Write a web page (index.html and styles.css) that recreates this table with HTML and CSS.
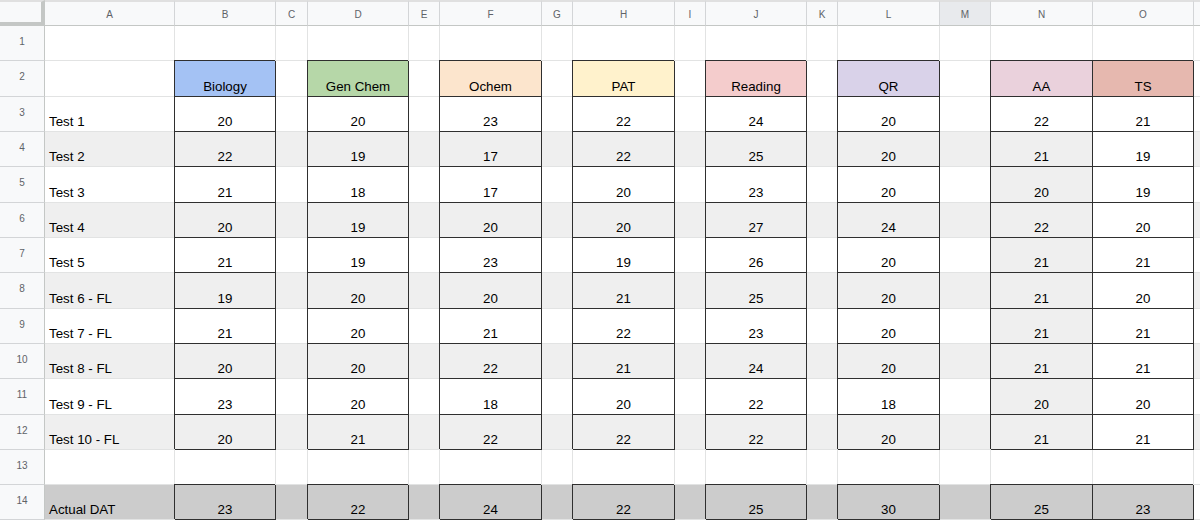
FILE: index.html
```html
<!DOCTYPE html>
<html>
<head>
<meta charset="utf-8">
<link rel="stylesheet" href="styles.css">
</head>
<body>
<div class="sheet">
  <div class="row hdr">
    <div class="corner"></div>
    <div class="ch">A</div><div class="ch">B</div><div class="ch">C</div><div class="ch">D</div><div class="ch">E</div><div class="ch">F</div><div class="ch">G</div><div class="ch">H</div><div class="ch">I</div><div class="ch">J</div><div class="ch">K</div><div class="ch">L</div><div class="ch sel">M</div><div class="ch">N</div><div class="ch">O</div><div class="ch end"></div>
  </div>

  <div class="row">
    <div class="rh">1</div>
    <div class="c"></div><div class="c"></div><div class="c"></div><div class="c"></div><div class="c"></div><div class="c"></div><div class="c"></div><div class="c"></div><div class="c"></div><div class="c"></div><div class="c"></div><div class="c"></div><div class="c"></div><div class="c"></div><div class="c"></div><div class="c end"></div>
  </div>

  <div class="row">
    <div class="rh">2</div>
    <div class="c"></div>
    <div class="c b n bio">Biology</div><div class="c"></div>
    <div class="c b n gen">Gen Chem</div><div class="c"></div>
    <div class="c b n och">Ochem</div><div class="c"></div>
    <div class="c b n pat">PAT</div><div class="c"></div>
    <div class="c b n rd">Reading</div><div class="c"></div>
    <div class="c b n qr">QR</div><div class="c"></div>
    <div class="c b n aa">AA</div>
    <div class="c b n ts">TS</div><div class="c end"></div>
  </div>

  <div class="row">
    <div class="rh">3</div>
    <div class="c">Test 1</div>
    <div class="c b n">20</div><div class="c"></div>
    <div class="c b n">20</div><div class="c"></div>
    <div class="c b n">23</div><div class="c"></div>
    <div class="c b n">22</div><div class="c"></div>
    <div class="c b n">24</div><div class="c"></div>
    <div class="c b n">20</div><div class="c"></div>
    <div class="c b n">22</div>
    <div class="c b n">21</div><div class="c end"></div>
  </div>

  <div class="row g">
    <div class="rh">4</div>
    <div class="c">Test 2</div>
    <div class="c b n">22</div><div class="c"></div>
    <div class="c b n">19</div><div class="c"></div>
    <div class="c b n">17</div><div class="c"></div>
    <div class="c b n">22</div><div class="c"></div>
    <div class="c b n">25</div><div class="c"></div>
    <div class="c b n">20</div><div class="c"></div>
    <div class="c b n gy">21</div>
    <div class="c b n w">19</div><div class="c end"></div>
  </div>

  <div class="row">
    <div class="rh">5</div>
    <div class="c">Test 3</div>
    <div class="c b n">21</div><div class="c"></div>
    <div class="c b n">18</div><div class="c"></div>
    <div class="c b n">17</div><div class="c"></div>
    <div class="c b n">20</div><div class="c"></div>
    <div class="c b n">23</div><div class="c"></div>
    <div class="c b n">20</div><div class="c"></div>
    <div class="c b n gy">20</div>
    <div class="c b n">19</div><div class="c end"></div>
  </div>

  <div class="row g">
    <div class="rh">6</div>
    <div class="c">Test 4</div>
    <div class="c b n">20</div><div class="c"></div>
    <div class="c b n">19</div><div class="c"></div>
    <div class="c b n">20</div><div class="c"></div>
    <div class="c b n">20</div><div class="c"></div>
    <div class="c b n">27</div><div class="c"></div>
    <div class="c b n">24</div><div class="c"></div>
    <div class="c b n gy">22</div>
    <div class="c b n w">20</div><div class="c end"></div>
  </div>

  <div class="row">
    <div class="rh">7</div>
    <div class="c">Test 5</div>
    <div class="c b n">21</div><div class="c"></div>
    <div class="c b n">19</div><div class="c"></div>
    <div class="c b n">23</div><div class="c"></div>
    <div class="c b n">19</div><div class="c"></div>
    <div class="c b n">26</div><div class="c"></div>
    <div class="c b n">20</div><div class="c"></div>
    <div class="c b n gy">21</div>
    <div class="c b n">21</div><div class="c end"></div>
  </div>

  <div class="row g">
    <div class="rh">8</div>
    <div class="c">Test 6 - FL</div>
    <div class="c b n">19</div><div class="c"></div>
    <div class="c b n">20</div><div class="c"></div>
    <div class="c b n">20</div><div class="c"></div>
    <div class="c b n">21</div><div class="c"></div>
    <div class="c b n">25</div><div class="c"></div>
    <div class="c b n">20</div><div class="c"></div>
    <div class="c b n gy">21</div>
    <div class="c b n w">20</div><div class="c end"></div>
  </div>

  <div class="row">
    <div class="rh">9</div>
    <div class="c">Test 7 - FL</div>
    <div class="c b n">21</div><div class="c"></div>
    <div class="c b n">20</div><div class="c"></div>
    <div class="c b n">21</div><div class="c"></div>
    <div class="c b n">22</div><div class="c"></div>
    <div class="c b n">23</div><div class="c"></div>
    <div class="c b n">20</div><div class="c"></div>
    <div class="c b n gy">21</div>
    <div class="c b n">21</div><div class="c end"></div>
  </div>

  <div class="row g">
    <div class="rh">10</div>
    <div class="c">Test 8 - FL</div>
    <div class="c b n">20</div><div class="c"></div>
    <div class="c b n">20</div><div class="c"></div>
    <div class="c b n">22</div><div class="c"></div>
    <div class="c b n">21</div><div class="c"></div>
    <div class="c b n">24</div><div class="c"></div>
    <div class="c b n">20</div><div class="c"></div>
    <div class="c b n gy">21</div>
    <div class="c b n w">21</div><div class="c end"></div>
  </div>

  <div class="row">
    <div class="rh">11</div>
    <div class="c">Test 9 - FL</div>
    <div class="c b n">23</div><div class="c"></div>
    <div class="c b n">20</div><div class="c"></div>
    <div class="c b n">18</div><div class="c"></div>
    <div class="c b n">20</div><div class="c"></div>
    <div class="c b n">22</div><div class="c"></div>
    <div class="c b n">18</div><div class="c"></div>
    <div class="c b n gy">20</div>
    <div class="c b n">20</div><div class="c end"></div>
  </div>

  <div class="row g">
    <div class="rh">12</div>
    <div class="c">Test 10 - FL</div>
    <div class="c b n">20</div><div class="c"></div>
    <div class="c b n">21</div><div class="c"></div>
    <div class="c b n">22</div><div class="c"></div>
    <div class="c b n">22</div><div class="c"></div>
    <div class="c b n">22</div><div class="c"></div>
    <div class="c b n">20</div><div class="c"></div>
    <div class="c b n gy">21</div>
    <div class="c b n w">21</div><div class="c end"></div>
  </div>

  <div class="row">
    <div class="rh">13</div>
    <div class="c"></div><div class="c"></div><div class="c"></div><div class="c"></div><div class="c"></div><div class="c"></div><div class="c"></div><div class="c"></div><div class="c"></div><div class="c"></div><div class="c"></div><div class="c"></div><div class="c"></div><div class="c"></div><div class="c"></div><div class="c end"></div>
  </div>

  <div class="row d">
    <div class="rh">14</div>
    <div class="c">Actual DAT</div>
    <div class="c b n">23</div><div class="c"></div>
    <div class="c b n">22</div><div class="c"></div>
    <div class="c b n">24</div><div class="c"></div>
    <div class="c b n">22</div><div class="c"></div>
    <div class="c b n">25</div><div class="c"></div>
    <div class="c b n">30</div><div class="c"></div>
    <div class="c b n">25</div>
    <div class="c b n">23</div><div class="c end"></div>
  </div>
</div>
</body>
</html>
```

FILE: styles.css
```css
html, body {
  margin: 0;
  padding: 0;
  background: #ffffff;
}

body {
  font-family: "Liberation Sans", Arial, sans-serif;
  overflow: hidden;
}

.sheet {
  display: grid;
  width: 1200px;
  grid-template-columns: 45px 130px 101px 32px 101px 31px 102px 31px 102px 31px 101px 31px 102px 51px 102px 101px 6px;
  grid-template-rows: 26px 35px 36px 35px 35px 36px 35px 35px 36px 35px 35px 36px 35px 35px 35px;
  padding-top: 0;
}

.row {
  display: contents;
}

.corner {
  background: #f8f9fa;
  border-right: 4px solid #c4c7c5;
  border-bottom: 4px solid #c4c7c5;
  border-top: 2px solid #e0e0e0;
  box-sizing: border-box;
}

.ch {
  box-sizing: border-box;
  background: #f8f9fa;
  border-top: 2px solid #e0e0e0;
  border-right: 1px solid #d3d5d7;
  border-bottom: 1px solid #c4c7c5;
  color: #5f6368;
  font-size: 10px;
  display: flex;
  align-items: center;
  justify-content: center;
  padding-top: 1px;
}

.ch.sel {
  background: #e8eaed;
}

.ch.end {
  border-right: none;
}

.rh {
  box-sizing: border-box;
  background: #f8f9fa;
  border-right: 1px solid #c4c7c5;
  border-bottom: 1px solid #d3d5d7;
  color: #5f6368;
  font-size: 10px;
  display: flex;
  align-items: center;
  justify-content: center;
  padding-bottom: 4px;
}

.c {
  box-sizing: border-box;
  border-right: 1px solid #e2e3e3;
  border-bottom: 1px solid #e2e3e3;
  background: #ffffff;
  color: #000000;
  font-size: 13.33px;
  display: flex;
  align-items: flex-end;
  padding: 0 3px 2px 4px;
  white-space: nowrap;
  overflow: hidden;
}

.c.end {
  border-right: none;
}

.g > .c {
  background: #efefef;
}

.d > .c {
  background: #cccccc;
}

.d > .c.end {
  background: #ffffff;
}

.c.n {
  justify-content: center;
  padding-left: 3px;
}

.c.b {
  border-right-color: #2f2f2f;
  border-bottom-color: #2f2f2f;
  box-shadow: -1px -1px 0 #2f2f2f;
  overflow: visible;
}

.c.gy {
  background: #efefef;
}

.g > .c.w {
  background: #ffffff;
}

.bio { background: #a4c2f4; }
.gen { background: #b6d7a8; }
.och { background: #fce5cd; }
.pat { background: #fff2cc; }
.rd  { background: #f4cccc; }
.qr  { background: #d9d2e9; }
.aa  { background: #ead1dc; }
.ts  { background: #e6b8af; }
```
